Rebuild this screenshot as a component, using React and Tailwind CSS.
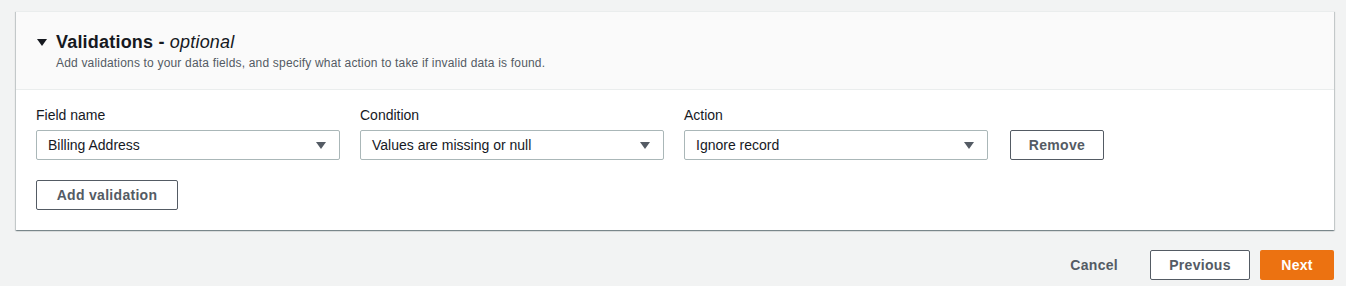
import React from "react";

const font = { fontFamily: "'Liberation Sans', Arial, sans-serif" };

function Caret({ className = "" }) {
  return (
    <svg width="10" height="7" viewBox="0 0 10 7" className={className}>
      <path d="M0 0 L10 0 L5 7 Z" fill="currentColor" />
    </svg>
  );
}

function Select({ label, value }) {
  return (
    <div className="flex flex-col w-[304px]">
      <div className="text-[14px] leading-[22px] text-[#16191f]">{label}</div>
      <div className="mt-[4px] h-[30px] border border-[#aab7b8] rounded-[2px] bg-white flex items-center justify-between pl-[11px] pr-[13px]">
        <span className="text-[14px] text-[#16191f]">{value}</span>
        <Caret className="text-[#545b64]" />
      </div>
    </div>
  );
}

export default function App() {
  return (
    <div className="w-[1346px] h-[286px] bg-[#f2f3f3] pt-[11px]" style={font}>
      <div className="ml-[16px] w-[1318px] bg-white border-t border-[#eaeded] shadow-[0_1px_1px_0_rgba(0,28,36,0.3),1px_1px_1px_0_rgba(0,28,36,0.15),-1px_1px_1px_0_rgba(0,28,36,0.15)]">
        <div className="bg-[#fafafa] border-b border-[#eaeded] h-[78px] pl-[21px] pt-[17px]">
          <div className="flex items-center">
            <Caret className="text-[#16191f] mr-[9px]" />
            <h2 className="text-[18px] leading-[26px] font-bold text-[#16191f] tracking-[0.2px]">
              Validations - <i className="font-normal">optional</i>
            </h2>
          </div>
          <p className="ml-[19px] text-[12px] leading-[16px] text-[#545b64] tracking-[0.18px]">
            Add validations to your data fields, and specify what action to take if invalid data is found.
          </p>
        </div>
        <div className="px-[20px] pt-[14px] pb-[20px]">
          <div className="flex items-end gap-[20px]">
            <Select label="Field name" value="Billing Address" />
            <Select label="Condition" value="Values are missing or null" />
            <Select label="Action" value="Ignore record" />
            <button className="ml-[2px] h-[30px] w-[94px] border border-[#545b64] rounded-[2px] bg-white text-[14px] font-bold text-[#545b64] tracking-[0.3px]">
              Remove
            </button>
          </div>
          <button className="mt-[20px] h-[30px] w-[142px] border border-[#545b64] rounded-[2px] bg-white text-[14px] font-bold text-[#545b64] tracking-[0.3px]">
            Add validation
          </button>
        </div>
      </div>
      <div className="mt-[20px] w-[1334px] flex justify-end items-center">
        <button className="h-[30px] px-[20px] text-[14px] font-bold text-[#545b64] tracking-[0.3px]">Cancel</button>
        <button className="ml-[12px] h-[30px] w-[100px] border border-[#545b64] rounded-[2px] bg-white text-[14px] font-bold text-[#545b64] tracking-[0.3px]">
          Previous
        </button>
        <button className="ml-[10px] h-[30px] w-[74px] rounded-[2px] bg-[#ec7211] text-[14px] font-bold text-white tracking-[0.3px]">
          Next
        </button>
      </div>
    </div>
  );
}
